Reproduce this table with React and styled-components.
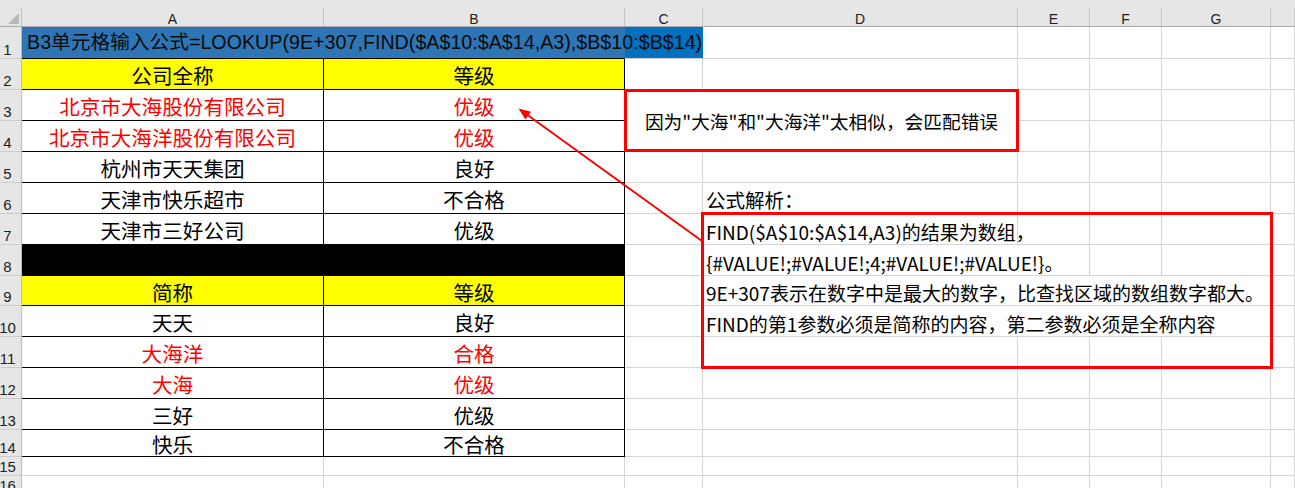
import React from 'react';
import styled, { createGlobalStyle } from 'styled-components';

const GlobalStyle = createGlobalStyle`
  html, body { margin: 0; padding: 0; background: #ffffff; }
  body { font-family: "Noto Sans CJK SC", sans-serif; overflow: hidden; }
`;

const ROW_HEIGHTS = [32, 31, 31, 31, 31, 31, 31, 31, 30, 31, 31, 31, 31, 27, 19, 19];
const GRID = '#d4d4d4';
const INK = '#000000';
const RED = '#ff0000';

const Sheet = styled.div`
  position: relative;
  width: 1295px;
  height: 488px;
  overflow: hidden;
  display: grid;
  grid-template-columns: 22px 302px 301px 78px 315px 72px 72px 109px 1fr;
  grid-template-rows: 27px ${ROW_HEIGHTS.map((h) => `${h}px`).join(' ')};
  align-content: start;
  background: #ffffff;
`;

const Corner = styled.div`
  box-sizing: border-box;
  background: #e6e6e6;
  border-bottom: 1px solid #ababab;
  display: flex;
  align-items: flex-end;
`;

const CornerInner = styled.div`
  box-sizing: border-box;
  width: 100%;
  height: 18px;
  border-right: 1px solid #c4c4c4;
  display: flex;
  align-items: flex-end;
  justify-content: flex-end;
  padding: 0 2px 2px 0;
`;

const ColHead = styled.div`
  box-sizing: border-box;
  background: #e6e6e6;
  border-bottom: 1px solid #ababab;
  display: flex;
  align-items: flex-end;
  min-width: 0;
`;

const ColLabel = styled.div`
  box-sizing: border-box;
  width: 100%;
  height: 18px;
  border-right: 1px solid #c4c4c4;
  font-family: "Liberation Sans", Arial, sans-serif;
  font-size: 14px;
  line-height: 18px;
  padding-top: 2px;
  color: #222;
  text-align: center;
`;

const RowHead = styled.div`
  box-sizing: border-box;
  background: #e6e6e6;
  border-right: 1px solid #bdbdbd;
  border-bottom: 1px solid #cbcbcb;
  font-family: "Liberation Sans", Arial, sans-serif;
  font-size: 15px;
  line-height: 1;
  color: #222;
  display: flex;
  align-items: flex-end;
  justify-content: center;
  padding: 0 6px 1px 0;
  white-space: nowrap;
  overflow: visible;
`;

const Cell = styled.div`
  box-sizing: border-box;
  min-width: 0;
  grid-column: ${(p) => (p.$span ? `span ${p.$span}` : 'auto')};
  background: ${(p) => p.$bg || 'transparent'};
  border-right: 1px solid ${(p) => p.$right || GRID};
  border-bottom: 1px solid ${(p) => p.$bottom || GRID};
  white-space: nowrap;
  overflow: visible;
`;

const TableCell = styled(Cell)`
  border-right-color: #000;
  border-bottom-color: #000;
  display: flex;
  align-items: center;
  justify-content: center;
  padding-top: 3px;
  font-family: "Noto Sans CJK SC", sans-serif;
  font-size: 20.6px;
  line-height: 1;
  color: ${(p) => (p.$red ? RED : INK)};
`;

const BannerCell = styled(Cell)`
  position: relative;
  z-index: 1;
  display: flex;
  align-items: center;
  padding-left: 5px;
  font-family: "Liberation Sans", "Noto Sans CJK SC", sans-serif;
  font-size: 19.7px;
  line-height: 1;
  color: #0a0a0a;
`;

const NoteCell = styled(Cell)`
  display: flex;
  align-items: center;
  padding: 4px 0 0 3px;
  font-family: "Noto Sans CJK SC", sans-serif;
  font-size: ${(p) => p.$size || 19}px;
  line-height: 1;
  color: ${INK};
`;

const Callout = styled.div`
  position: absolute;
  left: 624px;
  top: 89px;
  width: 395px;
  height: 63px;
  box-sizing: border-box;
  border: 3px solid ${RED};
  background: #ffffff;
  display: flex;
  align-items: center;
  justify-content: center;
  padding-top: 1px;
  font-family: "Noto Sans CJK SC", sans-serif;
  font-size: 18.7px;
  line-height: 1;
  color: ${INK};
  white-space: nowrap;
`;

const Frame = styled.div`
  position: absolute;
  left: 701px;
  top: 212px;
  width: 572px;
  height: 157px;
  box-sizing: border-box;
  border: 3px solid ${RED};
  pointer-events: none;
`;

const ArrowLayer = styled.svg`
  position: absolute;
  left: 0;
  top: 0;
  width: 1295px;
  height: 488px;
  pointer-events: none;
`;

const COLUMN_LETTERS = ['A', 'B', 'C', 'D', 'E', 'F', 'G', ''];

const TABLE = [
  { a: '公司全称', b: '等级', fill: '#ffff00' },
  { a: '北京市大海股份有限公司', b: '优级', red: true },
  { a: '北京市大海洋股份有限公司', b: '优级', red: true },
  { a: '杭州市天天集团', b: '良好' },
  { a: '天津市快乐超市', b: '不合格' },
  { a: '天津市三好公司', b: '优级' },
  { a: '', b: '', fill: '#000000' },
  { a: '简称', b: '等级', fill: '#ffff00' },
  { a: '天天', b: '良好' },
  { a: '大海洋', b: '合格', red: true },
  { a: '大海', b: '优级', red: true },
  { a: '三好', b: '优级' },
  { a: '快乐', b: '不合格' },
];

// Notes in column D, keyed by row number; span = columns the text spills over
const NOTES = {
  6: { text: '公式解析：', span: 1, size: 19.5 },
  7: { text: 'FIND($A$10:$A$14,A3)的结果为数组，', span: 1 },
  8: { text: '{#VALUE!;#VALUE!;4;#VALUE!;#VALUE!}。', span: 2 },
  9: { text: '9E+307表示在数字中是最大的数字，比查找区域的数组数字都大。', span: 4 },
  10: { text: 'FIND的第1参数必须是简称的内容，第二参数必须是全称内容', span: 4 },
};

function BlankCells({ from, count, row }) {
  return Array.from({ length: count }, (_, i) => <Cell key={`${row}-${from + i}`} />);
}

function RestOfRow({ row }) {
  // columns C..H => 6 columns
  const note = NOTES[row];
  if (!note) return <BlankCells from={2} count={6} row={row} />;
  return (
    <>
      <Cell />
      <NoteCell $span={note.span} $size={note.size}>{note.text}</NoteCell>
      <BlankCells from={4 + note.span} count={6 - 1 - note.span} row={row} />
    </>
  );
}

export default function App() {
  const tip = [518.5, 108.5];
  const tail = [702, 241];
  const dx = tail[0] - tip[0];
  const dy = tail[1] - tip[1];
  const len = Math.hypot(dx, dy);
  const ux = dx / len;
  const uy = dy / len;
  const headLen = 12;
  const halfW = 4.8;
  const bx = tip[0] + ux * headLen;
  const by = tip[1] + uy * headLen;
  const head = `${tip[0]},${tip[1]} ${bx - uy * halfW},${by + ux * halfW} ${bx + uy * halfW},${by - ux * halfW}`;

  return (
    <>
      <GlobalStyle />
      <Sheet>
        <Corner>
          <CornerInner>
            <svg width="11" height="11" viewBox="0 0 11 11">
              <polygon points="0,11 11,11 11,0" fill="#b9b9b9" />
            </svg>
          </CornerInner>
        </Corner>
        {COLUMN_LETTERS.map((l, i) => (
          <ColHead key={`h${i}`}>
            <ColLabel>{l}</ColLabel>
          </ColHead>
        ))}

        {/* Row 1 */}
        <RowHead>1</RowHead>
        <BannerCell $span={2} $bg="#2e75b6" $right="#2e75b6" $bottom="#000">
          B3单元格输入公式=LOOKUP(9E+307,FIND($A$10:$A$14,A3),$B$10:$B$14)
        </BannerCell>
        <Cell $bg="#0070c0" $right="transparent" />
        <BlankCells from={3} count={5} row={1} />

        {TABLE.map((r, i) => {
          const row = i + 2;
          return (
            <React.Fragment key={`r${row}`}>
              <RowHead>{row}</RowHead>
              <TableCell $bg={r.fill} $red={r.red}>{r.a}</TableCell>
              <TableCell $bg={r.fill} $red={r.red}>{r.b}</TableCell>
              <RestOfRow row={row} />
            </React.Fragment>
          );
        })}

        {[15, 16].map((row) => (
          <React.Fragment key={`r${row}`}>
            <RowHead>{row}</RowHead>
            <BlankCells from={0} count={8} row={row} />
          </React.Fragment>
        ))}

        <Callout>因为"大海"和"大海洋"太相似，会匹配错误</Callout>
        <Frame />
        <ArrowLayer viewBox="0 0 1295 488">
          <line x1={bx} y1={by} x2={tail[0]} y2={tail[1]} stroke={RED} strokeWidth="2" />
          <polygon points={head} fill={RED} />
        </ArrowLayer>
      </Sheet>
    </>
  );
}
